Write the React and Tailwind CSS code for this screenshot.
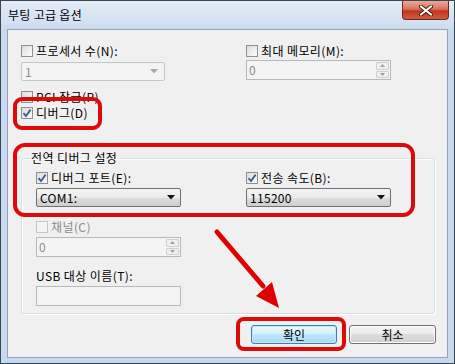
import React from "react";

const font = "font-['Noto_Sans_CJK_KR','Noto_Sans',sans-serif]";

function CheckBox({ checked, disabled }) {
  return (
    <span
      className={`relative flex h-[12px] w-[12px] shrink-0 items-center justify-center border ${
        disabled
          ? "border-[#c6c6c6] bg-[#f4f4f4]"
          : "border-[#8e8f8f] bg-gradient-to-br from-[#dcdcdc] to-[#fbfbfb]"
      }`}
    >
      {checked && (
        <svg width="10" height="10" viewBox="0 0 10 10">
          <path d="M1.5 5.2 L4 8 L8.6 1.6" fill="none" stroke="#3e5a92" strokeWidth="1.8" />
        </svg>
      )}
    </span>
  );
}

function CheckLabel({ checked, disabled, children }) {
  return (
    <div className="flex h-[14px] items-center gap-[3px]">
      <CheckBox checked={checked} disabled={disabled} />
      <span
        className={`text-[12px] leading-[14px] tracking-[0.4px] ${
          disabled ? "text-[#8c8c8c]" : "text-black"
        }`}
      >
        {children}
      </span>
    </div>
  );
}

function Caret({ color }) {
  return (
    <svg width="8" height="5" viewBox="0 0 8 5">
      <path d="M0 0 H8 L4 4.5 Z" fill={color} />
    </svg>
  );
}

function Combo({ value, disabled, className }) {
  if (disabled) {
    return (
      <div
        className={`flex h-[19px] w-[144px] items-center justify-between rounded-[2px] border border-[#c3c7ca] bg-[#f4f4f4] pl-[3px] pr-[6px] ${className || ""}`}
      >
        <span className="text-[12px] leading-none text-[#8c8c8c]">{value}</span>
        <Caret color="#a8a8a8" />
      </div>
    );
  }
  return (
    <div
      className={`flex h-[19px] w-[145px] items-center justify-between rounded-[2px] border border-[#707070] bg-[linear-gradient(#f3f3f3_0%,#ebebeb_50%,#dddddd_50%,#cfcfcf_100%)] pl-[3px] pr-[5px] ${className || ""}`}
    >
      <span className="text-[12px] leading-none tracking-[0.3px] text-black">{value}</span>
      <Caret color="#111" />
    </div>
  );
}

function Spinner({ value, className }) {
  return (
    <div
      className={`flex h-[20px] w-[145px] items-stretch border border-[#b5b9bc] bg-[#f4f4f4] ${className || ""}`}
    >
      <span className="flex flex-1 items-center pl-[2px] text-[12px] leading-none text-[#8c8c8c]">
        {value}
      </span>
      <div className="flex w-[15px] flex-col gap-[1px] p-[1px]">
        <div className="flex flex-1 items-center justify-center rounded-[1px] border border-[#cfcfcf] bg-[#f0f0f0]">
          <svg width="5" height="3" viewBox="0 0 5 3">
            <path d="M0 3 H5 L2.5 0 Z" fill="#a0a0a0" />
          </svg>
        </div>
        <div className="flex flex-1 items-center justify-center rounded-[1px] border border-[#cfcfcf] bg-[#f0f0f0]">
          <svg width="5" height="3" viewBox="0 0 5 3">
            <path d="M0 0 H5 L2.5 3 Z" fill="#a0a0a0" />
          </svg>
        </div>
      </div>
    </div>
  );
}

export default function App() {
  return (
    <div className={`relative flex h-[364px] w-[455px] flex-col overflow-hidden border border-[#3b4654] bg-[#c6d9ee] ${font}`}>
      {/* title bar */}
      <div className="flex h-[28px] shrink-0 items-start justify-between bg-gradient-to-b from-[#e4edf7] to-[#cddcee]">
        <span className="pl-[7px] pt-[7px] text-[12px] leading-[14px] tracking-[0.3px] text-black">
          부팅 고급 옵션
        </span>
        <div className="mr-[5px] flex h-[19px] w-[47px] items-center justify-center rounded-b-[4px] border border-t-0 border-[#6b2b22] bg-[linear-gradient(#e7a99b_0%,#d9735f_45%,#c3351f_55%,#d45a3c_100%)]">
          <svg width="14" height="11" viewBox="0 0 14 11">
            <path d="M2 1.5 L12 9.5 M12 1.5 L2 9.5" stroke="#4a1a12" strokeWidth="4" strokeLinecap="round" />
            <path d="M2 1.5 L12 9.5 M12 1.5 L2 9.5" stroke="#fff" strokeWidth="2.2" strokeLinecap="round" />
          </svg>
        </div>
      </div>

      {/* frame + panel */}
      <div className="flex flex-1 px-[6px] pb-[5px]">
        <div className="flex flex-1 flex-col border border-[#8ea4bf] bg-[#f0f0f0] pl-[13px] pr-[11px] pt-[14px]">
          <div className="grid grid-cols-[225px_1fr]">
            <div>
              <CheckLabel>프로세서 수(N):</CheckLabel>
              <Combo value="1" disabled className="mt-[4px]" />
            </div>
            <div>
              <CheckLabel>최대 메모리(M):</CheckLabel>
              <Spinner value="0" className="mt-[2px]" />
            </div>
          </div>

          <div className="mt-[9px]">
            <CheckLabel>PCI 잠금(P)</CheckLabel>
          </div>
          <div className="mt-[2px]">
            <CheckLabel checked>디버그(D)</CheckLabel>
          </div>

          <fieldset className="mt-[31px] mr-[1px] rounded-[3px] border border-[#d5dfe5] pb-[7px] shadow-[inset_1px_1px_0_#ffffff,1px_1px_0_#ffffff]">
            <legend className="ml-[7px] px-[2px] text-[12px] leading-[14px] tracking-[0.4px] text-black">
              전역 디버그 설정
            </legend>
            <div className="pl-[14px] pt-[6px]">
              <div className="grid grid-cols-[210px_1fr]">
                <div>
                  <CheckLabel checked>디버그 포트(E):</CheckLabel>
                  <Combo value="COM1:" className="mt-[3px]" />
                </div>
                <div>
                  <CheckLabel checked>전송 속도(B):</CheckLabel>
                  <Combo value="115200" className="mt-[3px]" />
                </div>
              </div>
              <div className="mt-[13px]">
                <CheckLabel disabled>채널(C)</CheckLabel>
              </div>
              <Spinner value="0" className="mt-[3px]" />
              <div className="mt-[12px] text-[12px] leading-[14px] tracking-[0.4px] text-black">
                USB 대상 이름(T):
              </div>
              <div className="mt-[3px] h-[20px] w-[145px] border border-[#b5b9bc] bg-[#f4f4f4]" />
            </div>
          </fieldset>

          <div className="mt-[11px] flex justify-end gap-[12px]">
            <button className="flex h-[19px] w-[86px] items-center justify-center rounded-[3px] border border-[#3c7fb1] bg-[linear-gradient(#eaf6fd_0%,#d9f0fc_50%,#bee6fd_50%,#a7d9f5_100%)] text-[12px] leading-none text-black shadow-[inset_0_0_0_1px_#bfe8fb]">
              확인
            </button>
            <button className="flex h-[19px] w-[87px] items-center justify-center rounded-[3px] border border-[#707070] bg-[linear-gradient(#f2f2f2_0%,#ebebeb_50%,#dddddd_50%,#cfcfcf_100%)] text-[12px] leading-none text-black shadow-[inset_0_0_0_1px_#fcfcfc]">
              취소
            </button>
          </div>
        </div>
      </div>

      {/* red annotations */}
      <div className="absolute left-[12px] top-[96px] h-[33px] w-[89px] rounded-[9px] border-4 border-[#dc0a0a]" />
      <div className="absolute left-[12px] top-[142px] h-[74px] w-[402px] rounded-[12px] border-4 border-[#dc0a0a]" />
      <div className="absolute left-[235px] top-[316px] h-[34px] w-[110px] rounded-[8px] border-4 border-[#dc0a0a]" />
      <svg className="absolute left-0 top-0" width="455" height="364" viewBox="0 0 455 364">
        <path d="M216 231 L262 285" stroke="#e00000" strokeWidth="5" strokeLinecap="round" />
        <path d="M278 307 L255 295 L271 281 Z" fill="#e00000" />
      </svg>
    </div>
  );
}
